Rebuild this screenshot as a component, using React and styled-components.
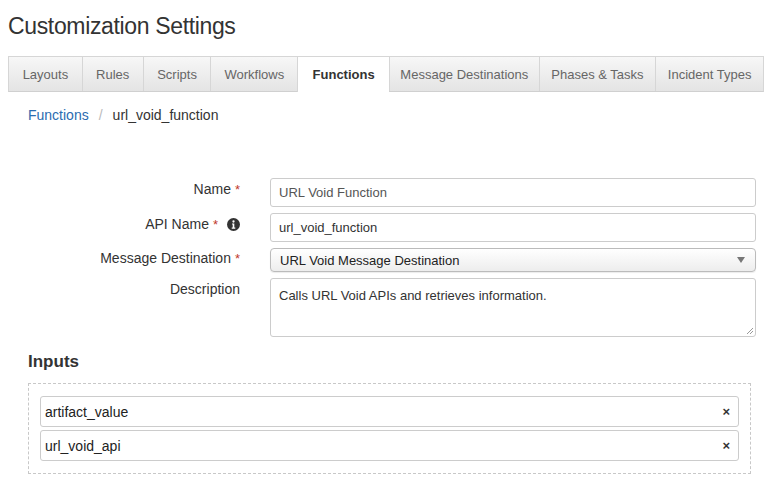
import React from 'react';
import styled, { createGlobalStyle } from 'styled-components';

const GlobalStyle = createGlobalStyle`
    body {
        margin: 0;
        background: #fff;
        font-family: 'Liberation Sans', Arial, sans-serif;
        color: #333;
    }
`;

const Page = styled.div`
    padding: 0 1px 0 8px;
    width: 765px;
    box-sizing: border-box;
`;

const Title = styled.h1`
    margin: 0;
    padding-top: 11px;
    height: 56px;
    box-sizing: border-box;
    font-size: 23px;
    font-weight: 400;
    letter-spacing: -0.35px;
    color: #333;
    line-height: 30px;
`;

const Tabs = styled.div`
    display: flex;
    height: 36px;
    border: 1px solid #d6d6d6;
    border-bottom-color: #d0d0d0;
    box-sizing: border-box;
`;

const Tab = styled.div`
    display: flex;
    align-items: center;
    justify-content: center;
    width: ${(p) => p.$w}px;
    font-size: 13px;
    color: ${(p) => (p.$active ? '#333' : '#666')};
    font-weight: ${(p) => (p.$active ? 700 : 400)};
    background: ${(p) =>
        p.$active ? '#fff' : 'linear-gradient(#f7f7f7, #e4e4e4)'};
    border-left: ${(p) => (p.$first ? 'none' : '1px solid #d6d6d6')};
    margin-bottom: ${(p) => (p.$active ? '-1px' : '0')};
    box-sizing: border-box;
`;

const Content = styled.div`
    padding: 0 8px 0 20px;
`;

const Crumbs = styled.div`
    display: flex;
    align-items: center;
    height: 46px;
    font-size: 14px;
    color: #333;
`;

const CrumbLink = styled.span`
    color: #2b6cb0;
`;

const Sep = styled.span`
    color: #bbb;
    margin: 0 10px 0 10px;
`;

const Form = styled.div`
    display: grid;
    grid-template-columns: 212px 1fr;
    column-gap: 30px;
    row-gap: 6px;
    margin-top: 40px;
`;

const Label = styled.div`
    display: flex;
    justify-content: flex-end;
    align-items: center;
    font-size: 14px;
    color: #333;
    padding-top: 1px;
    height: ${(p) => p.$h || 20}px;
`;

const Star = styled.span`
    color: #c0392b;
    font-size: 13px;
    margin-left: 4px;
`;

const Info = styled.span`
    display: inline-flex;
    margin-left: 9px;
`;

const Input = styled.div`
    height: ${(p) => p.$h}px;
    border: 1px solid #ccc;
    border-radius: 3px;
    box-sizing: border-box;
    display: flex;
    align-items: ${(p) => (p.$top ? 'flex-start' : 'center')};
    padding: ${(p) => (p.$top ? '9px 8px' : '0 8px')};
    font-size: 13px;
    color: ${(p) => (p.$muted ? '#555' : '#333')};
    position: relative;
`;

const Select = styled.div`
    height: 24px;
    border: 1px solid #bbb;
    border-radius: 4px;
    box-sizing: border-box;
    display: flex;
    align-items: center;
    justify-content: space-between;
    padding: 0 10px 0 9px;
    font-size: 13px;
    color: #222;
    background: linear-gradient(#fff, #ededed);
    box-shadow: 0 1px 1px rgba(0, 0, 0, 0.08);
`;

const Caret = styled.span`
    width: 0;
    height: 0;
    border-left: 4px solid transparent;
    border-right: 4px solid transparent;
    border-top: 6px solid #777;
`;

const Grip = styled.svg`
    position: absolute;
    right: 1px;
    bottom: 1px;
`;

const InputsTitle = styled.h2`
    margin: 15px 0 0;
    font-size: 17px;
    font-weight: 700;
    color: #333;
    line-height: 20px;
`;

const InputBox = styled.div`
    width: 723px;
    margin-top: 11px;
    border: 1px dashed #c8c8c8;
    box-sizing: border-box;
    padding: 12px 11px 12px 11px;
    display: flex;
    flex-direction: column;
    gap: 3px;
`;

const InputRow = styled.div`
    height: 31px;
    border: 1px solid #ccc;
    border-radius: 3px;
    box-sizing: border-box;
    display: flex;
    align-items: center;
    justify-content: space-between;
    padding: 0 8px 0 4px;
    font-size: 14px;
    color: #222;
`;

const Remove = styled.span`
    font-size: 13px;
    font-weight: 700;
    color: #333;
`;

const tabs = [
    ['Layouts', 73],
    ['Rules', 61],
    ['Scripts', 68],
    ['Workflows', 87],
    ['Functions', 92],
    ['Message Destinations', 150],
    ['Phases & Tasks', 117],
    ['Incident Types', 108],
];

const App = () => {
    return (
        <Page>
            <GlobalStyle />
            <Title>Customization Settings</Title>
            <Tabs>
                {tabs.map(([name, w], i) => (
                    <Tab
                        key={name}
                        $w={w}
                        $first={i === 0}
                        $active={name === 'Functions'}
                    >
                        {name}
                    </Tab>
                ))}
            </Tabs>
            <Content>
                <Crumbs>
                    <CrumbLink>Functions</CrumbLink>
                    <Sep>/</Sep>
                    <span>url_void_function</span>
                </Crumbs>
                <Form>
                    <Label>
                        Name<Star>*</Star>
                    </Label>
                    <Input $h={29} $muted>
                        URL Void Function
                    </Input>

                    <Label>
                        API Name<Star>*</Star>
                        <Info>
                            <svg width='13' height='13' viewBox='0 0 16 16'>
                                <circle cx='8' cy='8' r='8' fill='#333' />
                                <circle cx='8' cy='4.3' r='1.4' fill='#fff' />
                                <path
                                    d='M6.2 6.8h2.8v5h1.2v1.3H5.8v-1.3H7V8.1h-0.8z'
                                    fill='#fff'
                                />
                            </svg>
                        </Info>
                    </Label>
                    <Input $h={29}>url_void_function</Input>

                    <Label $h={18}>
                        Message Destination<Star>*</Star>
                    </Label>
                    <Select>
                        <span>URL Void Message Destination</span>
                        <Caret />
                    </Select>

                    <Label>Description</Label>
                    <Input $h={59} $top>
                        Calls URL Void APIs and retrieves information.
                        <Grip width='8' height='8' viewBox='0 0 8 8'>
                            <path
                                d='M7 1L1 7M7 4L4 7'
                                stroke='#999'
                                strokeWidth='1'
                            />
                        </Grip>
                    </Input>
                </Form>
                <InputsTitle>Inputs</InputsTitle>
                <InputBox>
                    {['artifact_value', 'url_void_api'].map((v) => (
                        <InputRow key={v}>
                            <span>{v}</span>
                            <Remove>×</Remove>
                        </InputRow>
                    ))}
                </InputBox>
            </Content>
        </Page>
    );
};

export default App;
